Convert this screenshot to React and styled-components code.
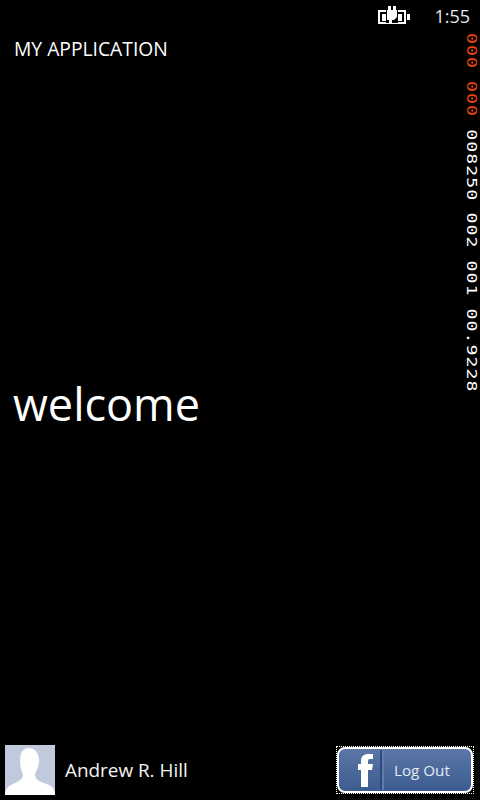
import styled, { createGlobalStyle } from "styled-components";

const GlobalStyle = createGlobalStyle`
  html, body {
    margin: 0;
    padding: 0;
    background: #000;
  }
`;

const Page = styled.div`
  position: relative;
  width: 480px;
  height: 800px;
  overflow: hidden;
  display: flex;
  flex-direction: column;
  background: #000;
  color: #fff;
  font-family: "Open Sans", "Noto Sans", sans-serif;
`;

const StatusBar = styled.div`
  height: 32px;
  display: flex;
  align-items: center;
  justify-content: flex-end;
  padding-right: 10px;
  gap: 24px;
`;

const Clock = styled.span`
  font-size: 18px;
  line-height: 32px;
  color: #e8e8e8;
`;

const AppTitle = styled.h1`
  margin: 4px 0 0;
  padding-left: 14px;
  font-size: 19.3px;
  line-height: 26px;
  font-weight: 400;
`;

const Main = styled.main`
  flex: 1;
  display: flex;
  align-items: center;
`;

const Welcome = styled.h2`
  margin: 0;
  padding-left: 13px;
  font-size: 45px;
  line-height: 60px;
  font-weight: 400;
`;

const Footer = styled.footer`
  display: flex;
  align-items: center;
  justify-content: space-between;
  padding: 0 6px 5px 5px;
`;

const Profile = styled.div`
  display: flex;
  align-items: center;
  gap: 10px;
`;

const Avatar = styled.svg`
  display: block;
  width: 50px;
  height: 50px;
`;

const UserName = styled.span`
  font-size: 18.9px;
  color: #f4f4f4;
`;

const ButtonFrame = styled.div`
  box-sizing: border-box;
  width: 138px;
  height: 48px;
  border: 1px dotted #fff;
`;

const LogoutButton = styled.button`
  box-sizing: border-box;
  width: 100%;
  height: 100%;
  padding: 0 0 0 19px;
  display: flex;
  align-items: center;
  border: 2px solid #fff;
  border-radius: 8px;
  background: linear-gradient(#5b77a6, #3c5b8f);
  color: #e4eaf4;
  font-family: inherit;
  font-size: 15.2px;
`;

const LogoMark = styled.svg`
  display: block;
  align-self: flex-end;
  margin-bottom: 4px;
`;

const Divider = styled.span`
  width: 2px;
  height: 40px;
  margin-left: 7px;
  background: #2f4a7c;
  border-right: 2px solid #5f7db0;
`;

const ButtonLabel = styled.span`
  margin-left: 10px;
`;

const Counters = styled.div`
  position: absolute;
  top: 33px;
  right: 0;
  display: flex;
  flex-direction: column;
  gap: 9.23px;
  font-family: "DejaVu Sans Mono", monospace;
  font-size: 14px;
  line-height: 17px;
  letter-spacing: 0.8px;
  transform: scaleY(1.3);
  transform-origin: top;
`;

const Counter = styled.span`
  writing-mode: vertical-rl;
  color: ${(p) => (p.$alert ? "#f04a10" : "#fff")};
`;

const BatteryIcon = () => (
  <svg width="32" height="20" viewBox="0 0 32 20">
    <rect x="1" y="5" width="26" height="12" fill="none" stroke="#fff" strokeWidth="2" />
    <rect x="3" y="7" width="22" height="8" fill="#000" />
    <path d="M4 8h4v7H4zM20 8h4v7h-4z" fill="#fff" />
    <rect x="29" y="8" width="3" height="6" fill="#fff" />
    <path d="M8 4h12v13H8z" fill="#000" />
    <path d="M10 0h3v4h2V0h3v4h1v7l-3 3h-2v4h-3v-4h-2L9 11V4h1z" fill="#fff" />
  </svg>
);

const App = () => (
  <Page>
    <GlobalStyle />
    <StatusBar>
      <BatteryIcon />
      <Clock>1:55</Clock>
    </StatusBar>
    <AppTitle>MY APPLICATION</AppTitle>
    <Main>
      <Welcome>welcome</Welcome>
    </Main>
    <Footer>
      <Profile>
        <Avatar viewBox="0 0 50 50">
          <rect width="50" height="50" fill="#c1cadd" />
          <path
            d="M24 3c6 0 10 5 10 12 0 6-2 10-4 14 0 4 2 6 6 8l8 3c3 1 6 4 6 10H0c0-5 2-8 6-10l6-3c4-2 6-4 6-8-2-4-3-8-3-14C15 8 18 3 24 3z"
            fill="#fff"
          />
        </Avatar>
        <UserName>Andrew R. Hill</UserName>
      </Profile>
      <ButtonFrame>
        <LogoutButton>
          <LogoMark width="15" height="33" viewBox="0 0 15 33">
            <path
              d="M3 33V16H0v-6h3V7c0-5 3-7 7-7h5v5h-3c-2 0-2 1-2 3v2h5l-1 6h-4v17z"
              fill="#fff"
            />
          </LogoMark>
          <Divider />
          <ButtonLabel>Log Out</ButtonLabel>
        </LogoutButton>
      </ButtonFrame>
    </Footer>
    <Counters>
      <Counter $alert>000</Counter>
      <Counter $alert>000</Counter>
      <Counter>008250</Counter>
      <Counter>002</Counter>
      <Counter>001</Counter>
      <Counter>00.9228</Counter>
    </Counters>
  </Page>
);

export default App;
